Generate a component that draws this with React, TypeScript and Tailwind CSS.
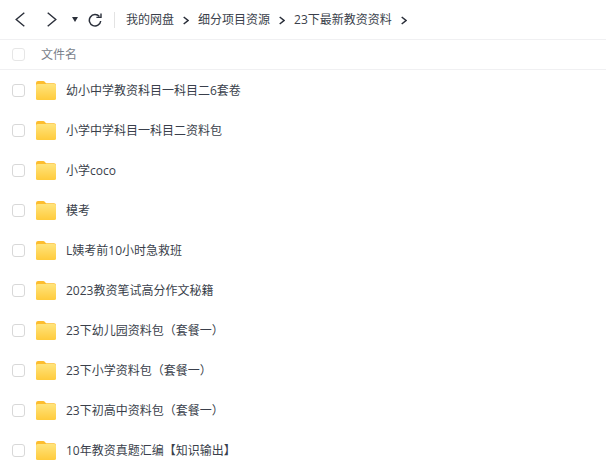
const files = [
  '幼小中学教资科目一科目二6套卷',
  '小学中学科目一科目二资料包',
  '小学coco',
  '模考',
  'L姨考前10小时急救班',
  '2023教资笔试高分作文秘籍',
  '23下幼儿园资料包（套餐一）',
  '23下小学资料包（套餐一）',
  '23下初高中资料包（套餐一）',
  '10年教资真题汇编【知识输出】',
];

const crumbs = ['我的网盘', '细分项目资源', '23下最新教资资料'];

function Chevron({ left = false, className = '' }: { left?: boolean; className?: string }) {
  return (
    <svg viewBox="0 0 10 15" className={className} fill="none" stroke="currentColor" strokeWidth="1.4">
      <path d={left ? 'M9.3 .7 1.2 7.5l8.1 6.8' : 'M.7 .7l8.1 6.8-8.1 6.8'} />
    </svg>
  );
}

function CrumbArrow() {
  return (
    <svg viewBox="0 0 6 9" className="w-[6px] h-[9px] text-[#2a2f3a]" fill="none" stroke="currentColor" strokeWidth="1.5">
      <path d="M.7 1 5 4.5.7 8" />
    </svg>
  );
}

function Folder() {
  return (
    <svg viewBox="0 0 20 19" className="w-5 h-[19px] shrink-0">
      <defs>
        <linearGradient id="folderFront" x1="0" y1="0" x2="0" y2="1">
          <stop offset="0" stopColor="#ffe47c" />
          <stop offset="1" stopColor="#ffcb3c" />
        </linearGradient>
      </defs>
      <path d="M0 2a2 2 0 0 1 2-2h5.2c.8 0 1.2.3 1.8 1l1 1.2h8a2 2 0 0 1 2 2V8H0z" fill="#fdbd2e" />
      <rect x="0" y="3" width="20" height="16" rx="1.6" fill="url(#folderFront)" />
    </svg>
  );
}

function Checkbox({ header = false }: { header?: boolean }) {
  return (
    <span
      className={
        header
          ? 'w-[13px] h-[13px] shrink-0 rounded-[3px] border-[1.5px] border-[#e6e6e6] bg-white'
          : 'w-[13px] h-[13px] shrink-0 rounded-[3px] border border-[#d8d8d8] bg-white'
      }
    />
  );
}

export default function App() {
  return (
    <div className="w-[606px] h-[476px] overflow-hidden bg-white text-[12px] text-[#3a3f4b] [font-family:'Open_Sans','Noto_Sans_CJK_SC',sans-serif]">
      <div className="h-10 flex items-center border-b border-[#f0f0f2]">
        <Chevron left className="ml-[15px] w-[10px] h-[15px] text-[#2a2f3a]" />
        <Chevron className="ml-[22px] w-[10px] h-[15px] text-[#2a2f3a]" />
        <span className="ml-[15px] w-0 h-0 border-x-[3px] border-x-transparent border-t-[5px] border-t-[#2a2f3a]" />
        <svg viewBox="0 0 14 14" className="ml-[10px] w-[14px] h-[14px] text-[#2a2f3a]" fill="none" stroke="currentColor" strokeWidth="1.5">
          <path d="M11.4 3.6A5.7 5.7 0 1 0 12.7 8" />
          <path d="M8.4 4.4h4.6V.6" strokeWidth="1.4" />
        </svg>
        <span className="ml-[12px] w-px h-4 bg-[#e3e3e3]" />
        <div className="ml-[11px] flex items-center gap-[9px] pt-px">
          {crumbs.map((c) => (
            <div key={c} className="flex items-center gap-[9px]">
              <span>{c}</span>
              <CrumbArrow />
            </div>
          ))}
        </div>
      </div>
      <div className="h-[30px] flex items-center border-b border-[#f0f0f2] pl-3 text-[#7a7f8a]">
        <Checkbox header />
        <span className="ml-4">文件名</span>
      </div>
      {files.map((f) => (
        <div key={f} className="h-10 flex items-center pl-3">
          <Checkbox />
          <span className="ml-[11px]"><Folder /></span>
          <span className="ml-[10px] pt-px">{f}</span>
        </div>
      ))}
    </div>
  );
}
